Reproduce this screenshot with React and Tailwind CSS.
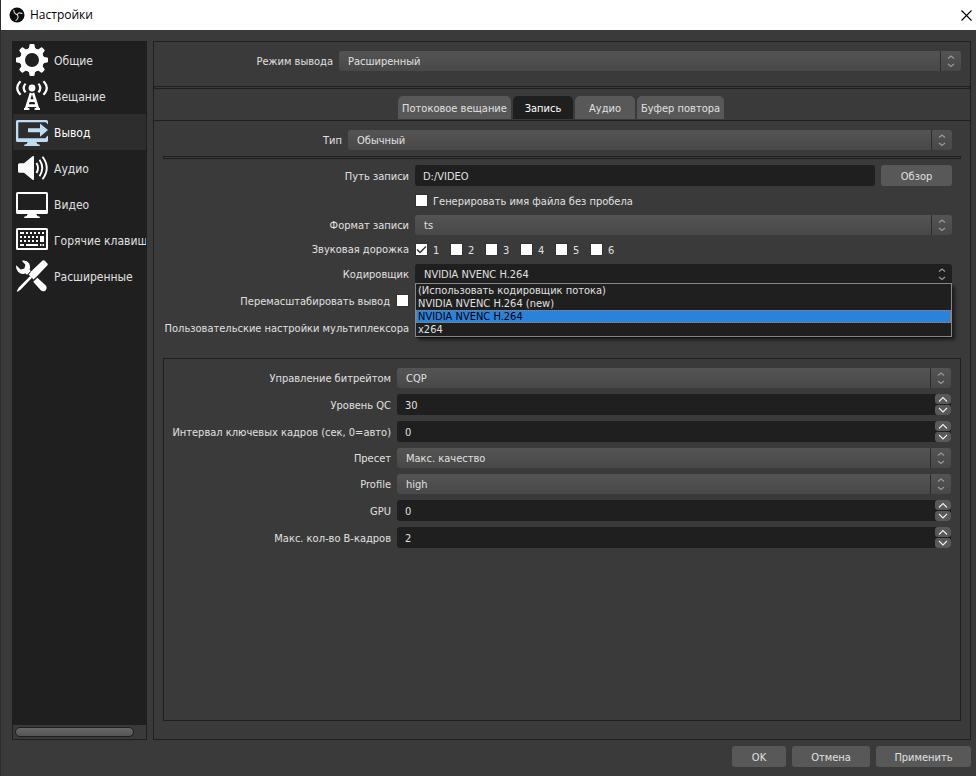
import { useState } from "react";

const teeth = [0, 45, 90, 135, 180, 225, 270, 315];

function GearIcon() {
  return (
    <svg viewBox="0 0 32 32" className="size-8 shrink-0 text-white" fill="currentColor">
      <circle cx="16" cy="16" r="9.5" fill="none" stroke="currentColor" strokeWidth="5" />
      {teeth.map((angle) => (
        <path key={angle} transform={`rotate(${angle} 16 16)`} d="M10.800 6 13 3.800 13.500.8Q13.700 0 14.400 0h3.200q.7 0 .9.8l.5 3L21.200 6z" />
      ))}
    </svg>
  );
}

function AntennaIcon() {
  return (
    <svg viewBox="0 0 32 32" className="size-8 shrink-0 text-white" fill="none" stroke="currentColor" strokeWidth="2.2">
      <circle cx="16" cy="8" r="3.4" fill="currentColor" stroke="none" />
      <path d="M9.6 3.6Q5.8 8 9.6 12.4M22.4 3.6Q26.2 8 22.4 12.4" />
      <path d="M4.6 1.2Q-2.2 8 4.6 14.8M27.4 1.2Q34.2 8 27.4 14.8" />
      <path d="M15 13 10 29M17 13l5 16M13 20.6h6M11.5 25.6h9" strokeWidth="2.600" />
      <path d="M8 29h5.4M18.6 29H24" strokeWidth="2.200" />
    </svg>
  );
}

function OutputIcon() {
  return (
    <svg viewBox="0 0 32 32" className="size-8 shrink-0 text-[#bfdcf5]" fill="currentColor">
      <path d="M1.5 4h29Q32 4 32 5.5V8.4L29.8 6.3H2.3V22.3H29.8V21.4L32 19.4v5.1q0 1.5-1.5 1.5h-29Q0 26 0 24.500V5.500Q0 4 1.500 4z" />
      <path d="M12 12.200h12V7.400L32 14l-8 6.800V16.200H12z" />
      <path d="M12 25.500h8Q20.500 28 23.800 28.800V30H8.200V28.800Q11.500 28 12 25.500z" />
    </svg>
  );
}

function SpeakerIcon() {
  return (
    <svg viewBox="0 0 32 32" className="size-8 shrink-0 text-white" fill="none" stroke="currentColor" strokeWidth="1.9">
      <path d="M3.500 11.300H8L16.500 4.200Q18 3.400 18 5V27Q18 28.600 16.500 27.800L8 20.700H3.500Q2 20.700 2 19.200V12.800Q2 11.300 3.500 11.300z" fill="currentColor" stroke="none" />
      <path d="M20.500 11Q23.500 16 20.500 21" />
      <path d="M23.500 7.800Q29 16 23.500 24.200" />
      <path d="M26.500 4.800Q35 16 26.500 27.200" />
    </svg>
  );
}

function MonitorIcon() {
  return (
    <svg viewBox="0 0 32 32" className="size-8 shrink-0 text-white" fill="currentColor">
      <path fillRule="evenodd" d="M1.500 4h29Q32 4 32 5.500v19q0 1.500-1.500 1.500h-29Q0 26 0 24.500V5.500Q0 4 1.500 4zM2 6V22H30V6z" />
      <path d="M12 25.500h8Q20.500 28 23.800 28.800V30H8.200V28.800Q11.500 28 12 25.500z" />
    </svg>
  );
}

function KeyboardIcon() {
  return (
    <svg viewBox="0 0 32 32" className="size-8 shrink-0 text-white" fill="currentColor">
      <path fillRule="evenodd" d="M1.500 4h29Q32 4 32 5.500v19q0 1.500-1.500 1.500h-29Q0 26 0 24.500V5.500Q0 4 1.500 4zM2 6V24H30V6z" />
      <path d="M4 8h4v2H4zM10 8h2v2h-2zM14 8h2v2h-2zM18 8h2v2h-2zM22 8h2v2h-2zM26 8h2v2h-2z" />
      <path d="M4 12h2v2H4zM8 12h2v2H8zM12 12h2v2h-2zM16 12h2v2h-2zM20 12h2v2h-2zM24 12h4v6h-4z" />
      <path d="M4 16h2v2H4zM8 16h2v2H8zM12 16h2v2h-2zM16 16h2v2h-2zM20 16h2v2h-2z" />
      <path d="M4 20h4v2H4zM10 20h12v2H10zM24 20h1.500v2H24zM26.500 20H28v2h-1.500z" />
    </svg>
  );
}

function ToolsIcon() {
  return (
    <svg viewBox="0 0 32 32" className="size-8 shrink-0 text-white" fill="currentColor">
      <path d="M26.600.6Q27.600-.2 28.600.6L31.400 3.400Q32.200 4.300 31.400 5.200L20.700 16.600Q20 17.400 19.200 17.800L17.600 19.400 12.600 14.400 14.200 12.800Q14.600 12 15.300 11.300z" />
      <path d="M14.200 16 16 17.800 4.800 29.600 1.600 31.800.8 31 2.800 27.600z" />
      <path d="M5.800.8Q10.600-.4 13.200 3.600 14.600 6.600 13.600 9.800L14.800 11 11 14.800 9.600 13.600Q5.200 15 2 11.800-.4 9 .2 5.200L4.600 9.400 8.400 8.600 9.400 4.800z" />
      <path d="M17.200 21.800 21.400 17.800 29.800 25.600Q31.600 28 29.600 30.400 27.200 32.200 25 30.600z" />
    </svg>
  );
}

function ObsLogo() {
  return (
    <svg viewBox="0 0 16 16" className="size-4 shrink-0" aria-hidden="true">
      <circle cx="8" cy="8" r="7.500" fill="#0c0c0c" />
      <g fill="none" stroke="#d8d8d8" strokeWidth="1.100" strokeLinecap="round">
        <path d="M4.800 3.200Q5 6.800 8.200 7.600" />
        <path d="M13 6.400Q9.600 4.800 8.200 7.600" />
        <path d="M7 13.400Q10.400 11 8.200 7.600" />
      </g>
    </svg>
  );
}

const pages = [
  { name: "Общие", Icon: GearIcon },
  { name: "Вещание", Icon: AntennaIcon },
  { name: "Вывод", Icon: OutputIcon },
  { name: "Аудио", Icon: SpeakerIcon },
  { name: "Видео", Icon: MonitorIcon },
  { name: "Горячие клавиши", Icon: KeyboardIcon },
  { name: "Расширенные", Icon: ToolsIcon },
];

const tabs = [
  { name: "Потоковое вещание", width: "w-[113px]" },
  { name: "Запись", width: "w-[60px]" },
  { name: "Аудио", width: "w-[60px]" },
  { name: "Буфер повтора", width: "w-[87px]" },
];

const encoders = ["(Использовать кодировщик потока)", "NVIDIA NVENC H.264 (new)", "NVIDIA NVENC H.264", "x264"];

function Arrows() {
  return (
    <svg viewBox="0 0 20 20" className="h-5 w-5" fill="none" stroke="#9a9a9a" strokeWidth="1.200">
      <path d="M7 7.500 10 5l3 2.500M7 13l3 2.500 3-2.500" />
    </svg>
  );
}

function Combo({ id, value }) {
  return (
    <div className="relative">
      <select id={id} defaultValue={value} className="block h-5 w-full appearance-none rounded-[3px] bg-linear-to-b from-[#545454] to-[#484848] pl-[9px] pr-6 pt-[2px] outline-none">
        <option>{value}</option>
      </select>
      <div className="pointer-events-none absolute right-0 top-0 border-l border-[#2c2c2c]">
        <Arrows />
      </div>
    </div>
  );
}

function Spin({ id, value }) {
  const [count, setCount] = useState(value);

  return (
    <div className="flex h-[21px] overflow-hidden rounded-[3px] bg-[#1f1f1f]">
      <input id={id} value={count} onChange={(e) => setCount(e.target.value)} className="min-w-0 flex-1 bg-transparent pl-2 pt-[2px] outline-none" />
      <div className="flex w-4 flex-col gap-px">
        <button type="button" aria-label="Больше" onClick={() => setCount(Number(count) + 1)} className="h-[10px] rounded-[3px] bg-[#595959]">
          <svg viewBox="0 0 16 10" className="h-[10px] w-4" fill="none" stroke="#f0f0f0" strokeWidth="1.100">
            <path d="M4 7.500 8 3.500l4 4" />
          </svg>
        </button>
        <button type="button" aria-label="Меньше" onClick={() => setCount(Number(count) - 1)} className="h-[10px] rounded-[3px] bg-[#595959]">
          <svg viewBox="0 0 16 10" className="h-[10px] w-4" fill="none" stroke="#f0f0f0" strokeWidth="1.100">
            <path d="M4 3l4 4 4-4" />
          </svg>
        </button>
      </div>
    </div>
  );
}

function Check({ id, checked }) {
  return (
    <span className="relative block size-[13px] shrink-0">
      <input id={id} type="checkbox" defaultChecked={checked} className="peer block size-[13px] appearance-none border border-[#323232] bg-white" />
      <svg viewBox="0 0 13 13" className="pointer-events-none absolute inset-0 hidden size-[13px] peer-checked:block" fill="none" stroke="#333" strokeWidth="1.500">
        <path d="M2 6.500 5 9.500 11 3.500" />
      </svg>
    </span>
  );
}

function Label({ htmlFor, children }) {
  return (
    <label htmlFor={htmlFor} className="whitespace-nowrap pt-[2px] text-right">
      {children}
    </label>
  );
}

export default function App() {
  const [page, setPage] = useState("Вывод");
  const [tab, setTab] = useState("Запись");
  const [encoder, setEncoder] = useState("NVIDIA NVENC H.264");

  return (
    <div className="flex min-h-screen flex-col border-l border-[#2d2d2d] bg-[#3a3a3a] font-['DejaVu_Sans_Condensed','DejaVu_Sans',sans-serif] text-[11px] leading-4 text-[#e0e0e0]">
      <header className="flex h-[30px] items-center bg-white pl-2 pr-1 text-black">
        <ObsLogo />
        <h1 className="ml-[5px] flex-1 font-['Open_Sans',sans-serif] text-[12px]">Настройки</h1>
        <button type="button" aria-label="Закрыть">
          <svg viewBox="0 0 11 11" className="size-[11px]" stroke="#000" strokeWidth="1.100">
            <path d="M.5.500l10 10M10.500.500l-10 10" />
          </svg>
        </button>
      </header>

      <div className="flex flex-1 gap-[6px] pl-[11px] pr-[5px] pt-[11px]">
        <nav className="flex w-[135px] shrink-0 flex-col overflow-hidden border border-[#1f1f1f] bg-[#1f1f1f] text-[12px]">
          {pages.map(({ name, Icon }) => (
            <button
              key={name}
              type="button"
              onClick={() => setPage(name)}
              className={`flex h-9 w-full items-center gap-[6px] whitespace-nowrap pl-[3px] ${page === name ? "bg-[#2d2d2d] text-white" : ""}`}
            >
              <Icon />
              <span className="pt-[2px]">{name}</span>
            </button>
          ))}
          <div className="mt-auto h-[14px] bg-[#3a3a3a] px-[2px] py-[2px]">
            <div className="h-[10px] w-[119px] rounded-full border border-[#1f1f1f] bg-linear-to-b from-[#686868] to-[#555]" />
          </div>
        </nav>

        <main className="flex min-w-0 flex-1 flex-col border border-[#1f1f1f]">
          <div className="grid grid-cols-[179px_1fr] items-center gap-[6px] pb-[15px] pr-[9px] pt-[9px]">
            <Label htmlFor="mode">Режим вывода</Label>
            <Combo id="mode" value="Расширенный" />
          </div>
          <div className="h-[3px] border border-[#1f1f1f]" />

          <div role="tablist" className="flex justify-center gap-[2px] pb-px pr-[2px] pt-[7px]">
            {tabs.map(({ name, width }) => (
              <button
                key={name}
                type="button"
                role="tab"
                aria-selected={tab === name}
                onClick={() => setTab(name)}
                className={`h-[23px] whitespace-nowrap rounded-t-[5px] pt-[2px] ${width} ${tab === name ? "bg-[#1f1f1f] text-white" : "bg-[#585858]"}`}
              >
                {name}
              </button>
            ))}
          </div>

          <section className="flex flex-1 flex-col border-t border-[#1f1f1f] px-[9px] pb-[18px] pt-[9px]">
            <div className="grid grid-cols-[179px_1fr] items-center gap-[6px] pb-[6px] pr-[9px]">
              <Label htmlFor="type">Тип</Label>
              <Combo id="type" value="Обычный" />
            </div>
            <div className="h-[3px] border border-[#1f1f1f]" />

            <div className="grid grid-cols-[246px_1fr] items-center gap-[6px] pb-5 pr-[9px] pt-[6px]">
              <Label htmlFor="path">Путь записи</Label>
              <div className="flex gap-[6px]">
                <input id="path" defaultValue="D:/VIDEO" className="h-[21px] min-w-0 flex-1 rounded-[3px] bg-[#1f1f1f] px-2 pt-[2px] outline-none" />
                <button type="button" className="h-[21px] w-[71px] rounded-[3px] bg-[#585858] pt-[2px]">
                  Обзор
                </button>
              </div>

              <div className="col-start-2 flex h-[17px] items-center gap-[5px]">
                <Check id="nospace" />
                <Label htmlFor="nospace">Генерировать имя файла без пробела</Label>
              </div>

              <Label htmlFor="format">Формат записи</Label>
              <Combo id="format" value="ts" />

              <span className="h-[17px] pt-px text-right">Звуковая дорожка</span>
              <div className="flex h-[17px] items-center">
                {[1, 2, 3, 4, 5, 6].map((n) => (
                  <div key={n} className="flex w-[35px] items-center gap-[5px]">
                    <Check id={`track${n}`} checked={n === 1} />
                    <Label htmlFor={`track${n}`}>{n}</Label>
                  </div>
                ))}
              </div>

              <Label htmlFor="encoder">Кодировщик</Label>
              <div className="relative">
                <select
                  id="encoder"
                  value={encoder}
                  onChange={(e) => setEncoder(e.target.value)}
                  className="block h-5 w-full appearance-none rounded-t-[3px] bg-[#1f1f1f] pl-[9px] pr-6 pt-[2px] outline-none"
                >
                  {encoders.map((name) => (
                    <option key={name}>{name}</option>
                  ))}
                </select>
                <div className="pointer-events-none absolute right-0 top-0">
                  <Arrows />
                </div>
                <ul role="listbox" aria-label="Кодировщик" className="absolute inset-x-0 top-[19px] z-10 border border-[#85868f] bg-[#1f1f1f] shadow-[3px_3px_3px_rgba(0,0,0,0.5)]">
                  {encoders.map((name) => (
                    <li
                      key={name}
                      role="option"
                      aria-selected={encoder === name}
                      onClick={() => setEncoder(name)}
                      className={`h-[13px] ${encoder === name ? "border border-dotted border-[#b3804f] bg-[#2a82da] pl-px leading-[12px] text-black" : "pl-[2px] leading-[14px]"}`}
                    >
                      {name}
                    </li>
                  ))}
                </ul>
              </div>

              <div className="flex h-[21px] items-center justify-end gap-[6px]">
                <Label htmlFor="rescale">Перемасштабировать вывод</Label>
                <Check id="rescale" />
              </div>
              <div />

              <Label htmlFor="muxer">Пользовательские настройки мультиплексора</Label>
              <input id="muxer" className="h-[21px] w-full rounded-[3px] bg-[#1f1f1f] px-2 outline-none" />
            </div>

            <div className="grid flex-1 grid-cols-[227px_1fr] content-start items-center gap-[6px] border border-[#1f1f1f] pb-[9px] pr-[9px] pt-[9px]">
              <Label htmlFor="rate">Управление битрейтом</Label>
              <Combo id="rate" value="CQP" />
              <Label htmlFor="qc">Уровень QC</Label>
              <Spin id="qc" value="30" />
              <Label htmlFor="keyint">Интервал ключевых кадров (сек, 0=авто)</Label>
              <Spin id="keyint" value="0" />
              <Label htmlFor="preset">Пресет</Label>
              <Combo id="preset" value="Макс. качество" />
              <Label htmlFor="profile">Profile</Label>
              <Combo id="profile" value="high" />
              <Label htmlFor="gpu">GPU</Label>
              <Spin id="gpu" value="0" />
              <Label htmlFor="bframes">Макс. кол-во B-кадров</Label>
              <Spin id="bframes" value="2" />
            </div>
          </section>
        </main>
      </div>

      <footer className="flex justify-end gap-[6px] pb-[9px] pr-[5px] pt-[6px]">
        <button type="button" className="h-[21px] w-[54px] rounded-[3px] bg-[#585858] pt-[2px]">
          OK
        </button>
        <button type="button" className="h-[21px] w-[78px] rounded-[3px] bg-[#585858] pt-[2px]">
          Отмена
        </button>
        <button type="button" className="h-[21px] w-[95px] rounded-[3px] bg-[#585858] pt-[2px]">
          Применить
        </button>
      </footer>
    </div>
  );
}
